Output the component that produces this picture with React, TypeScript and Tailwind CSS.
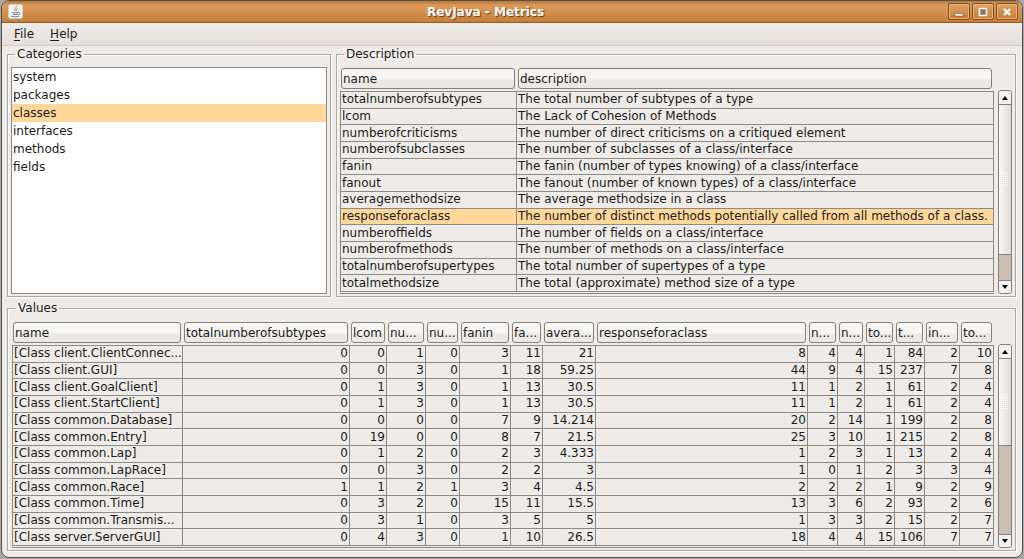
import type { ReactNode } from 'react'

const categories = ['system', 'packages', 'classes', 'interfaces', 'methods', 'fields']

const descriptions = [
  ['totalnumberofsubtypes', 'The total number of subtypes of a type'],
  ['lcom', 'The Lack of Cohesion of Methods'],
  ['numberofcriticisms', 'The number of direct criticisms on a critiqued element'],
  ['numberofsubclasses', 'The number of subclasses of a class/interface'],
  ['fanin', 'The fanin (number of types knowing) of a class/interface'],
  ['fanout', 'The fanout (number of known types) of a class/interface'],
  ['averagemethodsize', 'The average methodsize in a class'],
  ['responseforaclass', 'The number of distinct methods potentially called from all methods of a class.'],
  ['numberoffields', 'The number of fields on a class/interface'],
  ['numberofmethods', 'The number of methods on a class/interface'],
  ['totalnumberofsupertypes', 'The total number of supertypes of a type'],
  ['totalmethodsize', 'The total (approximate) method size of a type'],
]

const columns = [
  { label: 'name', width: 'w-[171px]' },
  { label: 'totalnumberofsubtypes', width: 'w-[167px]' },
  { label: 'lcom', width: 'w-[37px]' },
  { label: 'nu...', width: 'w-[39px]' },
  { label: 'nu...', width: 'w-[34px]' },
  { label: 'fanin', width: 'w-[51px]' },
  { label: 'fa...', width: 'w-[32px]' },
  { label: 'avera...', width: 'w-[53px]' },
  { label: 'responseforaclass', width: '' },
  { label: 'n...', width: 'w-[30px]' },
  { label: 'n...', width: 'w-[27px]' },
  { label: 'to...', width: 'w-[30px]' },
  { label: 't...', width: 'w-[30px]' },
  { label: 'in...', width: 'w-[35px]' },
  { label: 'to...', width: 'w-[34px]' },
]

const values = [
  ['[Class client.ClientConnec...', 0, 0, 1, 0, 3, 11, 21, 8, 4, 4, 1, 84, 2, 10],
  ['[Class client.GUI]', 0, 0, 3, 0, 1, 18, 59.25, 44, 9, 4, 15, 237, 7, 8],
  ['[Class client.GoalClient]', 0, 1, 3, 0, 1, 13, 30.5, 11, 1, 2, 1, 61, 2, 4],
  ['[Class client.StartClient]', 0, 1, 3, 0, 1, 13, 30.5, 11, 1, 2, 1, 61, 2, 4],
  ['[Class common.Database]', 0, 0, 0, 0, 7, 9, 14.214, 20, 2, 14, 1, 199, 2, 8],
  ['[Class common.Entry]', 0, 19, 0, 0, 8, 7, 21.5, 25, 3, 10, 1, 215, 2, 8],
  ['[Class common.Lap]', 0, 1, 2, 0, 2, 3, 4.333, 1, 2, 3, 1, 13, 2, 4],
  ['[Class common.LapRace]', 0, 0, 3, 0, 2, 2, 3, 1, 0, 1, 2, 3, 3, 4],
  ['[Class common.Race]', 1, 1, 2, 1, 3, 4, 4.5, 2, 2, 2, 1, 9, 2, 9],
  ['[Class common.Time]', 0, 3, 2, 0, 15, 11, 15.5, 13, 3, 6, 2, 93, 2, 6],
  ['[Class common.Transmis...', 0, 3, 1, 0, 3, 5, 5, 1, 3, 3, 2, 15, 2, 7],
  ['[Class server.ServerGUI]', 0, 4, 3, 0, 1, 10, 26.5, 18, 4, 4, 15, 106, 7, 7],
]

function Group({ title, className, children }: { title: string, className: string, children: ReactNode }) {
  return (
    <fieldset className={`min-w-0 border border-[#aaa8a2] shadow-[inset_1px_1px_0_#fff,1px_1px_0_#fff] ${className}`}>
      <legend className="ml-1 px-0.5 leading-4">{title}</legend>
      {children}
    </fieldset>
  )
}

function HeaderCell({ label }: { label: string }) {
  return (
    <th scope="col" className="h-[23px] p-0 pr-0.5 pl-px align-top font-normal">
      <button
        type="button"
        className="block h-[21px] w-full overflow-hidden rounded-[3px] border border-[#85817a] bg-linear-to-b from-[#f8f6f5] from-50% to-[#ebe8e5] to-60% pl-px text-left whitespace-nowrap"
      >
        {label}
      </button>
    </th>
  )
}

function ScrollBar({ label, thumb }: { label: string, thumb: string }) {
  return (
    <div className="mt-[22px] flex w-[14px] shrink-0 flex-col rounded-[3px] border border-[#85817a] bg-[#cbbfb5]">
      <button type="button" aria-label={`${label} up`} className="flex h-[14px] items-center justify-center rounded-t-[2px] border-b border-[#85817a] bg-[#f4f2f0]">
        <svg className="h-1 w-1.5" viewBox="0 0 6 4"><path d="M3 0L6 4H0z" /></svg>
      </button>
      <div className={`flex items-center justify-center border-b border-[#85817a] bg-linear-to-r from-[#faf9f8] to-[#dfdad5] ${thumb}`}>
        <svg className="h-4 w-2" viewBox="0 0 8 16" fill="none" stroke="#fff" strokeDasharray="1 1">
          <path d="M.5 0v16M2.5 0v16M4.5 0v16M6.5 0v16" />
        </svg>
      </div>
      <button type="button" aria-label={`${label} down`} className="mt-auto flex h-[13px] items-center justify-center rounded-b-[2px] border-t border-[#85817a] bg-[#f4f2f0]">
        <svg className="h-1 w-1.5" viewBox="0 0 6 4"><path d="M0 0H6L3 4z" /></svg>
      </button>
    </div>
  )
}

function WindowButton({ label, children }: { label: string, children: ReactNode }) {
  return (
    <button
      type="button"
      aria-label={label}
      className="flex h-[17px] w-[22px] items-center justify-center rounded-[2px] border border-[#87501f] bg-linear-to-b from-[#dfa468] to-[#c37c38] shadow-[inset_0_0_0_1px_#e5b27c]"
    >
      <svg className="h-2.5 w-2.5" viewBox="0 0 10 10">{children}</svg>
    </button>
  )
}

function JavaIcon() {
  return (
    <svg className="h-[15px] w-[15px]" viewBox="0 0 15 15" fill="none" strokeLinecap="round">
      <rect x=".5" y=".5" width="14" height="14" rx="2" fill="#f3f1ec" stroke="#c9d3dc" />
      <path d="M8.6 2.2C9 4 5.6 4.6 7.3 7.2M9.8 4.2C8 5 8.2 5.8 8.7 6.9" stroke="#e0873a" />
      <path d="M4.5 8.5C6 9.2 8.8 9.1 10 8.5M5.2 10.3C6.5 10.8 8.5 10.8 9.5 10.3M3.5 12.2C6 13.1 9 13.1 11 12.2M10.6 8.6C12.4 8.3 12.2 10 10.6 10.6" stroke="#4c7cae" />
    </svg>
  )
}

const cell = 'overflow-hidden border-r border-b border-[#8d8a85] py-0 leading-[15px] whitespace-nowrap'

export default function App() {
  return (
    <div className="min-h-screen bg-[#a9a9a8] px-px pb-px font-['DejaVu_Sans',sans-serif] text-[12px] text-[#1c1b1a]">
      <div className="overflow-hidden rounded-lg border border-[#55524c] bg-[#eeebe8]">
        <header className="flex h-[22px] items-center gap-0.5 border-b border-[#96561f] bg-linear-to-b from-[#b87838] via-[#dc9a5b] via-20% to-[#c67f3b] pr-1 pl-1.5">
          <JavaIcon />
          <h1 className="flex-1 text-center font-bold text-white [text-shadow:1px_1px_1px_#6b3d12]">RevJava - Metrics</h1>
          <WindowButton label="Minimize"><path d="M1 6.5h8v2.500H1z" fill="#fff" stroke="#6d421c" strokeWidth=".5" /></WindowButton>
          <WindowButton label="Maximize"><path d="M1.5 1.5h7v7h-7z" fill="#95734c" stroke="#fff" strokeWidth="1.5" /></WindowButton>
          <WindowButton label="Close"><path d="M2 2l6 6M8 2l-6 6" stroke="#fff" strokeWidth="2.2" /></WindowButton>
        </header>
        <nav className="flex h-[23px] items-center gap-4 border-b border-[#d5ccc4] bg-linear-to-b from-[#efecea] to-[#e6e0db] px-3">
          <button type="button"><span className="underline underline-offset-2">F</span>ile</button>
          <button type="button"><span className="underline underline-offset-2">H</span>elp</button>
        </nav>
        <main className="pr-1.5 pb-1.5 pl-[5px]">
          <div className="flex gap-[5px]">
            <Group title="Categories" className="w-[324px] shrink-0 px-[3px] pb-0.5">
              <ul className="mt-[5px] h-[227px] border border-[#8d8a85] bg-white">
                {categories.map((name) => (
                  <li key={name} className={name === 'classes' ? 'bg-[#ffd799]' : ''}>
                    <button type="button" className="block w-full px-px py-px text-left leading-4">{name}</button>
                  </li>
                ))}
              </ul>
            </Group>
            <Group title="Description" className="flex-1 px-[3px] pb-0.5">
              <div className="mt-1.5 flex h-[226px] gap-1">
                <div className="min-w-0 flex-1 border-b border-[#8d8a85]">
                  <table className="h-[224px] w-full table-fixed border-separate border-spacing-0">
                    <colgroup>
                      <col className="w-[177px]" />
                      <col />
                    </colgroup>
                    <thead>
                      <tr><HeaderCell label="name" /><HeaderCell label="description" /></tr>
                    </thead>
                    <tbody>
                      {descriptions.map(([name, text], i) => (
                        <tr key={name} className={name === 'responseforaclass' ? 'bg-[#ffd799]' : ''}>
                          <td className={`${cell} border-l pl-px ${i === 0 ? 'border-t' : ''}`}>{name}</td>
                          <td className={`${cell} pl-px ${i === 0 ? 'border-t' : ''}`}>{text}</td>
                        </tr>
                      ))}
                    </tbody>
                  </table>
                </div>
                <ScrollBar label="Scroll descriptions" thumb="h-[150px]" />
              </div>
            </Group>
          </div>
          <Group title="Values" className="mt-[3px] pr-[3px] pb-0.5 pl-1">
            <div className="mt-1.5 flex h-[226px] gap-1">
              <div className="min-w-0 flex-1 border-b border-[#8d8a85]">
                <table className="h-[224px] w-full table-fixed border-separate border-spacing-0">
                  <colgroup>
                    {columns.map((column, i) => <col key={i} className={column.width} />)}
                  </colgroup>
                  <thead>
                    <tr>{columns.map((column, i) => <HeaderCell key={i} label={column.label} />)}</tr>
                  </thead>
                  <tbody>
                    {values.map((row, i) => (
                      <tr key={row[0]}>
                        {row.map((value, j) => (
                          <td key={j} className={`${cell} ${i === 0 ? 'border-t' : ''} ${j === 0 ? 'border-l pl-px' : 'pr-px text-right'}`}>{value}</td>
                        ))}
                      </tr>
                    ))}
                  </tbody>
                </table>
              </div>
              <ScrollBar label="Scroll values" thumb="h-[87px]" />
            </div>
          </Group>
        </main>
      </div>
    </div>
  )
}
